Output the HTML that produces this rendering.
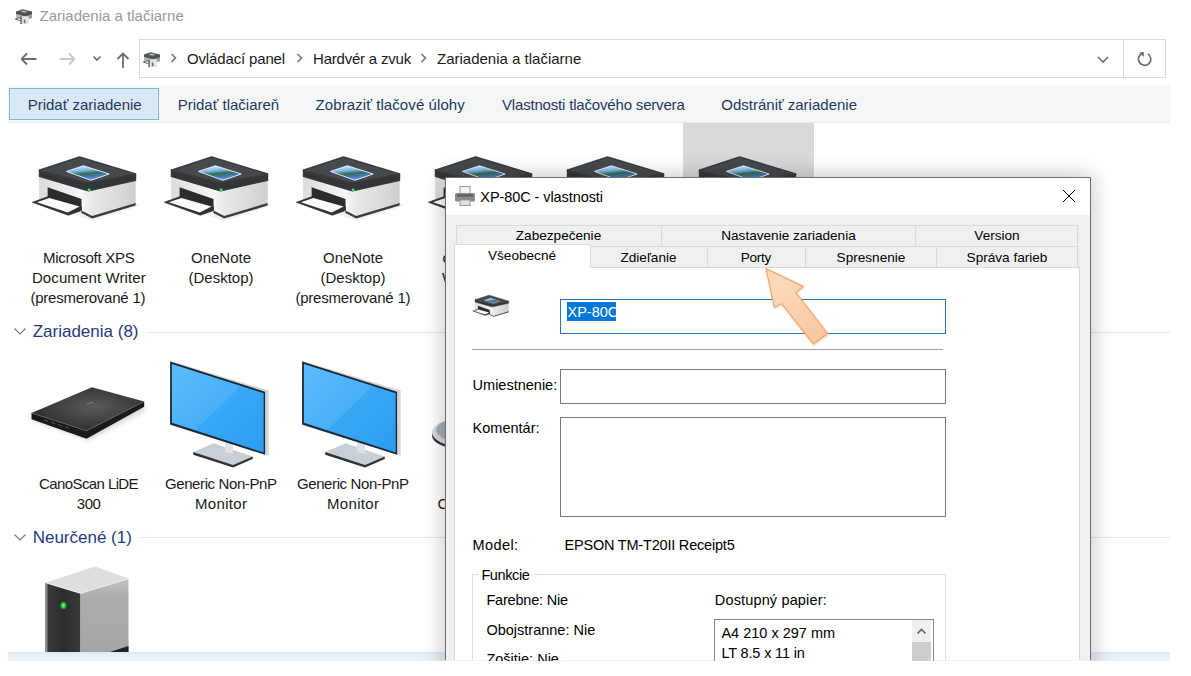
<!DOCTYPE html>
<html><head><meta charset="utf-8"><style>
html,body{margin:0;padding:0;background:#fff;width:1191px;height:676px;overflow:hidden;position:relative}
.t{position:absolute;font-family:"Liberation Sans", sans-serif;white-space:nowrap}
.b{position:absolute}
#clip{position:absolute;left:0;top:0;width:1191px;height:661px;overflow:hidden}
</style></head><body><div id="clip">
<svg class="b" style="left:15px;top:8px" width="19" height="18" viewBox="0 0 19 18"><path d="M1 6 L10 8.5 L17 6 L17 10 L10 12.3 L1 9.6Z" fill="#b4b6b8"/><path d="M10 8.5 L17 6 L17 10 L10 12.3Z" fill="#9a9c9e"/><path d="M1 3.6 L7.5 1.2 L17 3.6 L17 6.2 L10 8.6 L1 6.1Z" fill="#505356"/><path d="M5.2 3.4 L8.2 2.4 L12.6 3.6 L9.6 4.7Z" fill="#a3bdb6"/><path d="M0.3 11 L3.2 9.8 L8.2 11.2 L5.2 12.6Z" fill="#fff" stroke="#3a3a3a" stroke-width="0.8"/><rect x="5.4" y="8.3" width="8.4" height="7.8" fill="#e4e4e4"/><rect x="5.4" y="8.3" width="1.3" height="7.8" fill="#555"/><rect x="8.8" y="11.6" width="1.6" height="3.6" fill="#6a6a6a"/></svg>
<div class="t" style="left:39.50px;top:5.80px;font-size:15px;line-height:19px;color:#999;">Zariadenia a tlačiarne</div>
<svg class="b" style="left:16px;top:48px" width="120" height="24" viewBox="0 0 120 24"><path d="M5.5 11 H20.5 M5.5 11 L11 5.5 M5.5 11 L11 16.5" stroke="#6d6d6d" stroke-width="1.8" fill="none"/><path d="M43.5 11 H58.5 M58.5 11 L53 5.5 M58.5 11 L53 16.5" stroke="#c8c8c8" stroke-width="1.8" fill="none"/><path d="M77.5 8.5 L81 12 L84.5 8.5" stroke="#6d6d6d" stroke-width="1.6" fill="none"/><path d="M107 20 V5.5 M101.5 11 L107 5.5 L112.5 11" stroke="#6d6d6d" stroke-width="1.8" fill="none"/></svg>
<div class="b" style="left:139px;top:39px;width:985px;height:39px;border:1px solid #d9d9d9;background:#fff;box-sizing:border-box"></div>
<div class="b" style="left:1123px;top:39px;width:43px;height:39px;border:1px solid #d9d9d9;background:#fff;box-sizing:border-box"></div>
<svg class="b" style="left:143px;top:51px" width="19" height="18" viewBox="0 0 19 18"><path d="M1 6 L10 8.5 L17 6 L17 10 L10 12.3 L1 9.6Z" fill="#b4b6b8"/><path d="M10 8.5 L17 6 L17 10 L10 12.3Z" fill="#9a9c9e"/><path d="M1 3.6 L7.5 1.2 L17 3.6 L17 6.2 L10 8.6 L1 6.1Z" fill="#505356"/><path d="M5.2 3.4 L8.2 2.4 L12.6 3.6 L9.6 4.7Z" fill="#a3bdb6"/><path d="M0.3 11 L3.2 9.8 L8.2 11.2 L5.2 12.6Z" fill="#fff" stroke="#3a3a3a" stroke-width="0.8"/><rect x="5.4" y="8.3" width="8.4" height="7.8" fill="#e4e4e4"/><rect x="5.4" y="8.3" width="1.3" height="7.8" fill="#555"/><rect x="8.8" y="11.6" width="1.6" height="3.6" fill="#6a6a6a"/></svg>
<svg class="b" style="left:165px;top:50px" width="280" height="18" viewBox="0 0 280 18"><path d="M6.5 4 L10.5 8 L6.5 12" stroke="#7a7a7a" stroke-width="1.7" fill="none"/><path d="M132.5 4 L136.5 8 L132.5 12" stroke="#7a7a7a" stroke-width="1.7" fill="none"/><path d="M256.5 4 L260.5 8 L256.5 12" stroke="#7a7a7a" stroke-width="1.7" fill="none"/></svg>
<div class="t" style="left:187.00px;top:49.30px;font-size:15px;line-height:19px;color:#1a1a1a;letter-spacing:-0.15px;">Ovládací panel</div>
<div class="t" style="left:313.00px;top:49.30px;font-size:15px;line-height:19px;color:#1a1a1a;letter-spacing:-0.207px;">Hardvér a zvuk</div>
<div class="t" style="left:437.00px;top:49.30px;font-size:15px;line-height:19px;color:#1a1a1a;">Zariadenia a tlačiarne</div>
<svg class="b" style="left:1094px;top:50px" width="20" height="20" viewBox="0 0 20 20"><path d="M4 7 L9 12 L14 7" stroke="#6d6d6d" stroke-width="1.6" fill="none"/></svg>
<svg class="b" style="left:1134px;top:49px" width="22" height="22" viewBox="0 0 22 22"><path d="M13.98 4.9 A6.2 6.2 0 1 1 8.8 4.2" stroke="#6d6d6d" stroke-width="1.7" fill="none"/><path d="M5.2 3.4 L10.0 3.1 L9.6 8.0Z" fill="#6d6d6d"/></svg>
<div class="b" style="left:8px;top:85px;width:1162px;height:38px;background:#f5f6f7;border-bottom:1px solid #e6e9ee;box-sizing:border-box"></div>
<div class="b" style="left:9px;top:88px;width:150px;height:32px;background:#dae8f5;border:1px solid #86b6d2;box-sizing:border-box;box-shadow:inset 0 0 0 1px #d4f2fb"></div>
<div class="t" style="left:27.70px;top:95.20px;font-size:15px;line-height:19px;color:#1e395b;">Pridať zariadenie</div>
<div class="t" style="left:177.70px;top:95.40px;font-size:15px;line-height:19px;color:#1e395b;">Pridať tlačiareň</div>
<div class="t" style="left:315.60px;top:95.40px;font-size:15px;line-height:19px;color:#1e395b;letter-spacing:0.086px;">Zobraziť tlačové úlohy</div>
<div class="t" style="left:502.00px;top:95.40px;font-size:15px;line-height:19px;color:#1e395b;letter-spacing:-0.179px;">Vlastnosti tlačového servera</div>
<div class="t" style="left:721.30px;top:95.40px;font-size:15px;line-height:19px;color:#1e395b;">Odstrániť zariadenie</div>
<div class="b" style="left:683px;top:123px;width:131px;height:180px;background:#d9d9d9"></div>
<svg class="b" style="left:25px;top:145px" width="120.00" height="80.00" viewBox="0 0 120 80"><defs><linearGradient id="pb0" x1="0" y1="0" x2="1" y2="0"><stop offset="0" stop-color="#dcdcdc"/><stop offset="0.45" stop-color="#f6f6f6"/><stop offset="0.55" stop-color="#e9e9e9"/><stop offset="1" stop-color="#cfcfcf"/></linearGradient><linearGradient id="scr0" x1="0.2" y1="0" x2="0.5" y2="1"><stop offset="0" stop-color="#d6ecff"/><stop offset="0.35" stop-color="#7ab8f0"/><stop offset="0.55" stop-color="#3d6e48"/><stop offset="0.75" stop-color="#3c76bb"/><stop offset="1" stop-color="#6b9fd8"/></linearGradient></defs><path d="M10 56 L67 76 L114 61 L110 56 L66 70Z" fill="#000" fill-opacity="0.06"/><path d="M14.4 31 L63.4 45.9 L110.6 35 L110.6 57.9 L67.2 71.1 L14.4 54Z" fill="url(#pb0)" stroke="#d8d8d8" stroke-width="0.6" stroke-linejoin="round"/><path d="M56.5 65.4 L67.2 71.1 L110.6 57.9 L110.6 60.6 L67.2 73.6 L56.5 68Z" fill="#3c3c3c"/><path d="M14.4 25.2 L62.8 38 L110.6 29 L110.6 35.3 L63.4 45.9 L14.4 31.5Z" fill="#333639" stroke="#333639" stroke-width="1.2" stroke-linejoin="round"/><path d="M14.4 25.2 L54.6 12 L110.6 29 L62.8 38Z" fill="#46494d" stroke="#3a3d41" stroke-width="1.6" stroke-linejoin="round"/><path d="M41.4 26.4 L58.4 20.8 L84.2 29 L66 35.3Z" fill="url(#scr0)" stroke="#eef6ff" stroke-width="0.9" stroke-linejoin="round"/><path d="M22.6 42.2 L56.5 54.1 L56.5 65.4 L22.6 52.6Z" fill="#2a2c2e"/><path d="M7.5 57.3 L22.6 51.8 L56.5 61.8 L56.5 65.4 L43.3 70.2Z" fill="#2f3133" stroke="#2f3133" stroke-width="0.8" stroke-linejoin="round"/><path d="M11.8 57.3 L24.3 52.9 L54.6 61.6 L42.8 67.4Z" fill="#fbfbfb"/><circle cx="64.1" cy="44.7" r="1.5" fill="#3ee05a"/></svg>
<svg class="b" style="left:157px;top:145px" width="120.00" height="80.00" viewBox="0 0 120 80"><defs><linearGradient id="pb1" x1="0" y1="0" x2="1" y2="0"><stop offset="0" stop-color="#dcdcdc"/><stop offset="0.45" stop-color="#f6f6f6"/><stop offset="0.55" stop-color="#e9e9e9"/><stop offset="1" stop-color="#cfcfcf"/></linearGradient><linearGradient id="scr1" x1="0.2" y1="0" x2="0.5" y2="1"><stop offset="0" stop-color="#d6ecff"/><stop offset="0.35" stop-color="#7ab8f0"/><stop offset="0.55" stop-color="#3d6e48"/><stop offset="0.75" stop-color="#3c76bb"/><stop offset="1" stop-color="#6b9fd8"/></linearGradient></defs><path d="M10 56 L67 76 L114 61 L110 56 L66 70Z" fill="#000" fill-opacity="0.06"/><path d="M14.4 31 L63.4 45.9 L110.6 35 L110.6 57.9 L67.2 71.1 L14.4 54Z" fill="url(#pb1)" stroke="#d8d8d8" stroke-width="0.6" stroke-linejoin="round"/><path d="M56.5 65.4 L67.2 71.1 L110.6 57.9 L110.6 60.6 L67.2 73.6 L56.5 68Z" fill="#3c3c3c"/><path d="M14.4 25.2 L62.8 38 L110.6 29 L110.6 35.3 L63.4 45.9 L14.4 31.5Z" fill="#333639" stroke="#333639" stroke-width="1.2" stroke-linejoin="round"/><path d="M14.4 25.2 L54.6 12 L110.6 29 L62.8 38Z" fill="#46494d" stroke="#3a3d41" stroke-width="1.6" stroke-linejoin="round"/><path d="M41.4 26.4 L58.4 20.8 L84.2 29 L66 35.3Z" fill="url(#scr1)" stroke="#eef6ff" stroke-width="0.9" stroke-linejoin="round"/><path d="M22.6 42.2 L56.5 54.1 L56.5 65.4 L22.6 52.6Z" fill="#2a2c2e"/><path d="M7.5 57.3 L22.6 51.8 L56.5 61.8 L56.5 65.4 L43.3 70.2Z" fill="#2f3133" stroke="#2f3133" stroke-width="0.8" stroke-linejoin="round"/><path d="M11.8 57.3 L24.3 52.9 L54.6 61.6 L42.8 67.4Z" fill="#fbfbfb"/><circle cx="64.1" cy="44.7" r="1.5" fill="#3ee05a"/></svg>
<svg class="b" style="left:289px;top:145px" width="120.00" height="80.00" viewBox="0 0 120 80"><defs><linearGradient id="pb2" x1="0" y1="0" x2="1" y2="0"><stop offset="0" stop-color="#dcdcdc"/><stop offset="0.45" stop-color="#f6f6f6"/><stop offset="0.55" stop-color="#e9e9e9"/><stop offset="1" stop-color="#cfcfcf"/></linearGradient><linearGradient id="scr2" x1="0.2" y1="0" x2="0.5" y2="1"><stop offset="0" stop-color="#d6ecff"/><stop offset="0.35" stop-color="#7ab8f0"/><stop offset="0.55" stop-color="#3d6e48"/><stop offset="0.75" stop-color="#3c76bb"/><stop offset="1" stop-color="#6b9fd8"/></linearGradient></defs><path d="M10 56 L67 76 L114 61 L110 56 L66 70Z" fill="#000" fill-opacity="0.06"/><path d="M14.4 31 L63.4 45.9 L110.6 35 L110.6 57.9 L67.2 71.1 L14.4 54Z" fill="url(#pb2)" stroke="#d8d8d8" stroke-width="0.6" stroke-linejoin="round"/><path d="M56.5 65.4 L67.2 71.1 L110.6 57.9 L110.6 60.6 L67.2 73.6 L56.5 68Z" fill="#3c3c3c"/><path d="M14.4 25.2 L62.8 38 L110.6 29 L110.6 35.3 L63.4 45.9 L14.4 31.5Z" fill="#333639" stroke="#333639" stroke-width="1.2" stroke-linejoin="round"/><path d="M14.4 25.2 L54.6 12 L110.6 29 L62.8 38Z" fill="#46494d" stroke="#3a3d41" stroke-width="1.6" stroke-linejoin="round"/><path d="M41.4 26.4 L58.4 20.8 L84.2 29 L66 35.3Z" fill="url(#scr2)" stroke="#eef6ff" stroke-width="0.9" stroke-linejoin="round"/><path d="M22.6 42.2 L56.5 54.1 L56.5 65.4 L22.6 52.6Z" fill="#2a2c2e"/><path d="M7.5 57.3 L22.6 51.8 L56.5 61.8 L56.5 65.4 L43.3 70.2Z" fill="#2f3133" stroke="#2f3133" stroke-width="0.8" stroke-linejoin="round"/><path d="M11.8 57.3 L24.3 52.9 L54.6 61.6 L42.8 67.4Z" fill="#fbfbfb"/><circle cx="64.1" cy="44.7" r="1.5" fill="#3ee05a"/></svg>
<svg class="b" style="left:421px;top:145px" width="120.00" height="80.00" viewBox="0 0 120 80"><defs><linearGradient id="pb3" x1="0" y1="0" x2="1" y2="0"><stop offset="0" stop-color="#dcdcdc"/><stop offset="0.45" stop-color="#f6f6f6"/><stop offset="0.55" stop-color="#e9e9e9"/><stop offset="1" stop-color="#cfcfcf"/></linearGradient><linearGradient id="scr3" x1="0.2" y1="0" x2="0.5" y2="1"><stop offset="0" stop-color="#d6ecff"/><stop offset="0.35" stop-color="#7ab8f0"/><stop offset="0.55" stop-color="#3d6e48"/><stop offset="0.75" stop-color="#3c76bb"/><stop offset="1" stop-color="#6b9fd8"/></linearGradient></defs><path d="M10 56 L67 76 L114 61 L110 56 L66 70Z" fill="#000" fill-opacity="0.06"/><path d="M14.4 31 L63.4 45.9 L110.6 35 L110.6 57.9 L67.2 71.1 L14.4 54Z" fill="url(#pb3)" stroke="#d8d8d8" stroke-width="0.6" stroke-linejoin="round"/><path d="M56.5 65.4 L67.2 71.1 L110.6 57.9 L110.6 60.6 L67.2 73.6 L56.5 68Z" fill="#3c3c3c"/><path d="M14.4 25.2 L62.8 38 L110.6 29 L110.6 35.3 L63.4 45.9 L14.4 31.5Z" fill="#333639" stroke="#333639" stroke-width="1.2" stroke-linejoin="round"/><path d="M14.4 25.2 L54.6 12 L110.6 29 L62.8 38Z" fill="#46494d" stroke="#3a3d41" stroke-width="1.6" stroke-linejoin="round"/><path d="M41.4 26.4 L58.4 20.8 L84.2 29 L66 35.3Z" fill="url(#scr3)" stroke="#eef6ff" stroke-width="0.9" stroke-linejoin="round"/><path d="M22.6 42.2 L56.5 54.1 L56.5 65.4 L22.6 52.6Z" fill="#2a2c2e"/><path d="M7.5 57.3 L22.6 51.8 L56.5 61.8 L56.5 65.4 L43.3 70.2Z" fill="#2f3133" stroke="#2f3133" stroke-width="0.8" stroke-linejoin="round"/><path d="M11.8 57.3 L24.3 52.9 L54.6 61.6 L42.8 67.4Z" fill="#fbfbfb"/><circle cx="64.1" cy="44.7" r="1.5" fill="#3ee05a"/></svg>
<svg class="b" style="left:553px;top:145px" width="120.00" height="80.00" viewBox="0 0 120 80"><defs><linearGradient id="pb4" x1="0" y1="0" x2="1" y2="0"><stop offset="0" stop-color="#dcdcdc"/><stop offset="0.45" stop-color="#f6f6f6"/><stop offset="0.55" stop-color="#e9e9e9"/><stop offset="1" stop-color="#cfcfcf"/></linearGradient><linearGradient id="scr4" x1="0.2" y1="0" x2="0.5" y2="1"><stop offset="0" stop-color="#d6ecff"/><stop offset="0.35" stop-color="#7ab8f0"/><stop offset="0.55" stop-color="#3d6e48"/><stop offset="0.75" stop-color="#3c76bb"/><stop offset="1" stop-color="#6b9fd8"/></linearGradient></defs><path d="M10 56 L67 76 L114 61 L110 56 L66 70Z" fill="#000" fill-opacity="0.06"/><path d="M14.4 31 L63.4 45.9 L110.6 35 L110.6 57.9 L67.2 71.1 L14.4 54Z" fill="url(#pb4)" stroke="#d8d8d8" stroke-width="0.6" stroke-linejoin="round"/><path d="M56.5 65.4 L67.2 71.1 L110.6 57.9 L110.6 60.6 L67.2 73.6 L56.5 68Z" fill="#3c3c3c"/><path d="M14.4 25.2 L62.8 38 L110.6 29 L110.6 35.3 L63.4 45.9 L14.4 31.5Z" fill="#333639" stroke="#333639" stroke-width="1.2" stroke-linejoin="round"/><path d="M14.4 25.2 L54.6 12 L110.6 29 L62.8 38Z" fill="#46494d" stroke="#3a3d41" stroke-width="1.6" stroke-linejoin="round"/><path d="M41.4 26.4 L58.4 20.8 L84.2 29 L66 35.3Z" fill="url(#scr4)" stroke="#eef6ff" stroke-width="0.9" stroke-linejoin="round"/><path d="M22.6 42.2 L56.5 54.1 L56.5 65.4 L22.6 52.6Z" fill="#2a2c2e"/><path d="M7.5 57.3 L22.6 51.8 L56.5 61.8 L56.5 65.4 L43.3 70.2Z" fill="#2f3133" stroke="#2f3133" stroke-width="0.8" stroke-linejoin="round"/><path d="M11.8 57.3 L24.3 52.9 L54.6 61.6 L42.8 67.4Z" fill="#fbfbfb"/><circle cx="64.1" cy="44.7" r="1.5" fill="#3ee05a"/></svg>
<svg class="b" style="left:685px;top:145px" width="120.00" height="80.00" viewBox="0 0 120 80"><defs><linearGradient id="pb5" x1="0" y1="0" x2="1" y2="0"><stop offset="0" stop-color="#dcdcdc"/><stop offset="0.45" stop-color="#f6f6f6"/><stop offset="0.55" stop-color="#e9e9e9"/><stop offset="1" stop-color="#cfcfcf"/></linearGradient><linearGradient id="scr5" x1="0.2" y1="0" x2="0.5" y2="1"><stop offset="0" stop-color="#d6ecff"/><stop offset="0.35" stop-color="#7ab8f0"/><stop offset="0.55" stop-color="#3d6e48"/><stop offset="0.75" stop-color="#3c76bb"/><stop offset="1" stop-color="#6b9fd8"/></linearGradient></defs><path d="M10 56 L67 76 L114 61 L110 56 L66 70Z" fill="#000" fill-opacity="0.06"/><path d="M14.4 31 L63.4 45.9 L110.6 35 L110.6 57.9 L67.2 71.1 L14.4 54Z" fill="url(#pb5)" stroke="#d8d8d8" stroke-width="0.6" stroke-linejoin="round"/><path d="M56.5 65.4 L67.2 71.1 L110.6 57.9 L110.6 60.6 L67.2 73.6 L56.5 68Z" fill="#3c3c3c"/><path d="M14.4 25.2 L62.8 38 L110.6 29 L110.6 35.3 L63.4 45.9 L14.4 31.5Z" fill="#333639" stroke="#333639" stroke-width="1.2" stroke-linejoin="round"/><path d="M14.4 25.2 L54.6 12 L110.6 29 L62.8 38Z" fill="#46494d" stroke="#3a3d41" stroke-width="1.6" stroke-linejoin="round"/><path d="M41.4 26.4 L58.4 20.8 L84.2 29 L66 35.3Z" fill="url(#scr5)" stroke="#eef6ff" stroke-width="0.9" stroke-linejoin="round"/><path d="M22.6 42.2 L56.5 54.1 L56.5 65.4 L22.6 52.6Z" fill="#2a2c2e"/><path d="M7.5 57.3 L22.6 51.8 L56.5 61.8 L56.5 65.4 L43.3 70.2Z" fill="#2f3133" stroke="#2f3133" stroke-width="0.8" stroke-linejoin="round"/><path d="M11.8 57.3 L24.3 52.9 L54.6 61.6 L42.8 67.4Z" fill="#fbfbfb"/><circle cx="64.1" cy="44.7" r="1.5" fill="#3ee05a"/></svg>
<div class="t" style="left:-61.33px;top:248.10px;width:300px;text-align:center;font-size:15px;line-height:19px;color:#1a1a1a;letter-spacing:-0.269px;">Microsoft XPS</div>
<div class="t" style="left:-61.14px;top:268.10px;width:300px;text-align:center;font-size:15px;line-height:19px;color:#1a1a1a;letter-spacing:0.113px;">Document Writer</div>
<div class="t" style="left:-62.11px;top:288.10px;width:300px;text-align:center;font-size:15px;line-height:19px;color:#1a1a1a;letter-spacing:-0.213px;">(presmerované 1)</div>
<div class="t" style="left:71.00px;top:248.10px;width:300px;text-align:center;font-size:15px;line-height:19px;color:#1a1a1a;">OneNote</div>
<div class="t" style="left:71.00px;top:268.10px;width:300px;text-align:center;font-size:15px;line-height:19px;color:#1a1a1a;">(Desktop)</div>
<div class="t" style="left:203.00px;top:248.10px;width:300px;text-align:center;font-size:15px;line-height:19px;color:#1a1a1a;">OneNote</div>
<div class="t" style="left:203.00px;top:268.10px;width:300px;text-align:center;font-size:15px;line-height:19px;color:#1a1a1a;">(Desktop)</div>
<div class="t" style="left:202.89px;top:288.10px;width:300px;text-align:center;font-size:15px;line-height:19px;color:#1a1a1a;letter-spacing:-0.213px;">(presmerované 1)</div>
<svg class="b" style="left:12px;top:324px" width="16" height="14" viewBox="0 0 16 14"><path d="M2.5 4.5 L8 10 L13.5 4.5" stroke="#7a7a7a" stroke-width="1.2" fill="none"/></svg>
<div class="t" style="left:32.70px;top:321.31px;font-size:17px;line-height:21px;color:#263a82;">Zariadenia (8)</div>
<div class="b" style="left:147px;top:332px;width:1023px;height:1px;background:#e5e5e5"></div>
<svg class="b" style="left:12px;top:530px" width="16" height="14" viewBox="0 0 16 14"><path d="M2.5 4.5 L8 10 L13.5 4.5" stroke="#7a7a7a" stroke-width="1.2" fill="none"/></svg>
<div class="t" style="left:32.70px;top:527.11px;font-size:17px;line-height:21px;color:#263a82;">Neurčené (1)</div>
<div class="b" style="left:141px;top:537px;width:1029px;height:1px;background:#e5e5e5"></div>
<svg class="b" style="left:24px;top:380px" width="128" height="70" viewBox="0 0 128 70"><defs><radialGradient id="sc" cx="0.55" cy="0.45" r="0.6"><stop offset="0" stop-color="#5a5a5a"/><stop offset="0.6" stop-color="#3e3e3e"/><stop offset="1" stop-color="#2a2a2a"/></radialGradient><filter id="sblur" x="-20%" y="-50%" width="140%" height="200%"><feGaussianBlur stdDeviation="2.5"/></filter></defs><path d="M9 40 L64 60 L122 30 L120 26 L63 52 L9 34Z" fill="#000" fill-opacity="0.18" filter="url(#sblur)"/><path d="M7.5 33 L62.5 50.7 L120.2 21.5 L120.2 26.8 L62.5 58.7 L7.5 39.2Z" fill="#1a1a1a"/><path d="M7.5 33 L67.9 7.3 L120.2 21.5 L62.5 50.7Z" fill="url(#sc)"/><path d="M7.5 33 L62.5 50.7 L120.2 21.5" stroke="#6a6a6a" stroke-width="0.6" fill="none"/><path d="M20 40 L24 41.3 M27 42.3 L31 43.6 M34 44.6 L38 45.9 M41 46.9 L45 48.2" stroke="#555" stroke-width="1"/><path d="M63 24 L69 22" stroke="#8a8a8a" stroke-width="0.8"/></svg>
<svg class="b" style="left:156px;top:358px" width="120" height="112" viewBox="0 0 120 112"><defs><linearGradient id="ms0" x1="0" y1="0" x2="1" y2="1"><stop offset="0" stop-color="#5cbcfb"/><stop offset="0.5" stop-color="#48b0f8"/><stop offset="0.5" stop-color="#38a7f5"/><stop offset="1" stop-color="#2b9df0"/></linearGradient></defs><path d="M37.2 94.1 L57.6 85.2 L96.7 98.6 L77.1 107.1Z" fill="#c9d0d5"/><path d="M37.2 94.1 L77.1 107.1 L96.7 98.6 L96.7 101 L77.1 109.6 L37.2 96.8Z" fill="#2e3338"/><path d="M69 82 L77 84 L77 96 L69 94Z" fill="#dfe3e6"/><path d="M14.1 2.7 L112.7 32.5 L112.7 97.7 L14.1 67Z" fill="#d3d6d9"/><path d="M14.1 3.5 L109.1 33.7 L109.1 96.8 L14.1 66.6Z" fill="#1b2836"/><path d="M15.9 5.9 L107.7 35.2 L107.7 94.6 L15.9 64.8Z" fill="url(#ms0)"/></svg>
<svg class="b" style="left:288px;top:358px" width="120" height="112" viewBox="0 0 120 112"><defs><linearGradient id="ms1" x1="0" y1="0" x2="1" y2="1"><stop offset="0" stop-color="#5cbcfb"/><stop offset="0.5" stop-color="#48b0f8"/><stop offset="0.5" stop-color="#38a7f5"/><stop offset="1" stop-color="#2b9df0"/></linearGradient></defs><path d="M37.2 94.1 L57.6 85.2 L96.7 98.6 L77.1 107.1Z" fill="#c9d0d5"/><path d="M37.2 94.1 L77.1 107.1 L96.7 98.6 L96.7 101 L77.1 109.6 L37.2 96.8Z" fill="#2e3338"/><path d="M69 82 L77 84 L77 96 L69 94Z" fill="#dfe3e6"/><path d="M14.1 2.7 L112.7 32.5 L112.7 97.7 L14.1 67Z" fill="#d3d6d9"/><path d="M14.1 3.5 L109.1 33.7 L109.1 96.8 L14.1 66.6Z" fill="#1b2836"/><path d="M15.9 5.9 L107.7 35.2 L107.7 94.6 L15.9 64.8Z" fill="url(#ms1)"/></svg>
<div class="t" style="left:-61.50px;top:474.30px;width:300px;text-align:center;font-size:15px;line-height:19px;color:#1a1a1a;letter-spacing:-0.59px;">CanoScan LiDE</div>
<div class="t" style="left:-61.45px;top:494.30px;width:300px;text-align:center;font-size:15px;line-height:19px;color:#1a1a1a;letter-spacing:-0.5px;">300</div>
<div class="t" style="left:70.81px;top:474.30px;width:300px;text-align:center;font-size:15px;line-height:19px;color:#1a1a1a;letter-spacing:-0.39px;">Generic Non-PnP</div>
<div class="t" style="left:71.18px;top:494.30px;width:300px;text-align:center;font-size:15px;line-height:19px;color:#1a1a1a;letter-spacing:0.35px;">Monitor</div>
<div class="t" style="left:202.81px;top:474.30px;width:300px;text-align:center;font-size:15px;line-height:19px;color:#1a1a1a;letter-spacing:-0.39px;">Generic Non-PnP</div>
<div class="t" style="left:203.18px;top:494.30px;width:300px;text-align:center;font-size:15px;line-height:19px;color:#1a1a1a;letter-spacing:0.35px;">Monitor</div>
<svg class="b" style="left:44px;top:565px" width="88" height="88" viewBox="0 0 88 88"><defs><linearGradient id="tw" x1="0" y1="0" x2="0" y2="1"><stop offset="0" stop-color="#c4c4c4"/><stop offset="0.25" stop-color="#acacac"/><stop offset="1" stop-color="#a6a6a6"/></linearGradient><linearGradient id="tf" x1="0" y1="0" x2="1" y2="0"><stop offset="0" stop-color="#3c3c3e"/><stop offset="0.5" stop-color="#2c2c2e"/><stop offset="1" stop-color="#3a3a3c"/></linearGradient><radialGradient id="led"><stop offset="0" stop-color="#8dff8d"/><stop offset="0.6" stop-color="#22c23a"/><stop offset="1" stop-color="#1b6b2a"/></radialGradient></defs><path d="M1.5 17.7 L51 1.4 L84.5 13.6 L36.5 28.3Z" fill="#dedede"/><path d="M1.5 17.7 L36.5 28.3 L36.5 87 L1.5 87Z" fill="url(#tf)"/><path d="M1.5 17.7 L1.5 87 L3.5 87 L3.5 19Z" fill="#8a8a8a"/><path d="M36.5 28.3 L84.5 13.6 L84.5 87 L36.5 87Z" fill="url(#tw)"/><path d="M1.5 17.7 L36.5 28.3 L84.5 13.6" stroke="#f2f2f2" stroke-width="1" fill="none"/><path d="M66 87 L84.5 81 L84.5 87Z" fill="#222"/><ellipse cx="19.4" cy="40.5" rx="3.3" ry="4" fill="url(#led)"/></svg>
<div class="b" style="left:8px;top:652px;width:1162px;height:9px;background:linear-gradient(#dfe6ef,#eaf0f8 40%,#eef3fa)"></div>
<div class="t" style="left:442.50px;top:248.10px;font-size:15px;line-height:19px;color:#1a1a1a;">c</div>
<div class="t" style="left:442.00px;top:268.10px;font-size:15px;line-height:19px;color:#1a1a1a;">W</div>
<svg class="b" style="left:428px;top:412px" width="18" height="42" viewBox="0 0 18 42"><ellipse cx="34" cy="23.5" rx="30" ry="13.5" fill="#2e3236"/><ellipse cx="34" cy="20.5" rx="30" ry="14" fill="#d5dade"/><ellipse cx="35" cy="18" rx="27" ry="12" fill="#a3aeb8"/></svg>
<div class="t" style="left:437.50px;top:494.30px;font-size:15px;line-height:19px;color:#1a1a1a;">C</div>
<div class="b" style="left:445px;top:177px;width:646px;height:520px;box-shadow:0 0 20px 2px rgba(0,0,0,0.22)"></div>
<div class="b" style="left:445px;top:177px;width:646px;height:483px;background:#f0f0f0;border:1px solid #6e6e6e;border-bottom:none;box-sizing:border-box"></div>
<div class="b" style="left:446px;top:178px;width:644px;height:37px;background:#fff"></div>
<svg class="b" style="left:454px;top:185px" width="22" height="22" viewBox="0 0 22 22"><rect x="6" y="1.5" width="10" height="7" fill="#f4f4f4" stroke="#9a9a9a" stroke-width="1"/><rect x="1" y="8" width="20" height="8.5" rx="1.5" fill="#8a8a8a"/><rect x="3" y="9.5" width="16" height="2" fill="#5a5a5a"/><rect x="6" y="15" width="10" height="5.5" fill="#d6e4ea" stroke="#9a9a9a" stroke-width="1"/></svg>
<div class="t" style="left:480.30px;top:187.78px;font-size:14.5px;line-height:18px;color:#000;letter-spacing:-0.079px;">XP-80C - vlastnosti</div>
<svg class="b" style="left:1062px;top:189px" width="14" height="14" viewBox="0 0 14 14"><path d="M1 1 L13 13 M13 1 L1 13" stroke="#000" stroke-width="1"/></svg>
<div class="b" style="left:456px;top:225px;width:206px;height:22px;background:#f0f0f0;border:1px solid #d9d9d9;box-sizing:border-box"></div>
<div class="b" style="left:661px;top:225px;width:255px;height:22px;background:#f0f0f0;border:1px solid #d9d9d9;box-sizing:border-box"></div>
<div class="b" style="left:915px;top:225px;width:163px;height:22px;background:#f0f0f0;border:1px solid #d9d9d9;box-sizing:border-box"></div>
<div class="t" style="left:408.50px;top:227.29px;width:300px;text-align:center;font-size:13.6px;line-height:17px;color:#000;">Zabezpečenie</div>
<div class="t" style="left:638.50px;top:227.29px;width:300px;text-align:center;font-size:13.6px;line-height:17px;color:#000;">Nastavenie zariadenia</div>
<div class="t" style="left:847.00px;top:227.29px;width:300px;text-align:center;font-size:13.6px;line-height:17px;color:#000;">Version</div>
<div class="b" style="left:454px;top:267px;width:626px;height:393px;background:#fff;border:1px solid #d9d9d9;border-bottom:none;box-sizing:border-box"></div>
<div class="b" style="left:590px;top:246px;width:118px;height:22px;background:#f0f0f0;border:1px solid #d9d9d9;box-sizing:border-box"></div>
<div class="b" style="left:707px;top:246px;width:99px;height:22px;background:#f0f0f0;border:1px solid #d9d9d9;box-sizing:border-box"></div>
<div class="b" style="left:805px;top:246px;width:132px;height:22px;background:#f0f0f0;border:1px solid #d9d9d9;box-sizing:border-box"></div>
<div class="b" style="left:936px;top:246px;width:142px;height:22px;background:#f0f0f0;border:1px solid #d9d9d9;box-sizing:border-box"></div>
<div class="b" style="left:454px;top:244px;width:137px;height:24px;background:#fff;border:1px solid #d9d9d9;border-bottom:none;box-sizing:border-box"></div>
<div class="t" style="left:372.00px;top:246.59px;width:300px;text-align:center;font-size:13.6px;line-height:17px;color:#000;">Všeobecné</div>
<div class="t" style="left:498.50px;top:249.09px;width:300px;text-align:center;font-size:13.6px;line-height:17px;color:#000;">Zdieľanie</div>
<div class="t" style="left:605.83px;top:249.09px;width:300px;text-align:center;font-size:13.6px;line-height:17px;color:#000;letter-spacing:-0.34px;">Porty</div>
<div class="t" style="left:721.00px;top:249.09px;width:300px;text-align:center;font-size:13.6px;line-height:17px;color:#000;">Spresnenie</div>
<div class="t" style="left:857.00px;top:249.09px;width:300px;text-align:center;font-size:13.6px;line-height:17px;color:#000;">Správa farieb</div>
<svg class="b" style="left:470.2px;top:291.2px" width="42.00" height="28.00" viewBox="0 0 120 80"><defs><linearGradient id="pb9" x1="0" y1="0" x2="1" y2="0"><stop offset="0" stop-color="#dcdcdc"/><stop offset="0.45" stop-color="#f6f6f6"/><stop offset="0.55" stop-color="#e9e9e9"/><stop offset="1" stop-color="#cfcfcf"/></linearGradient><linearGradient id="scr9" x1="0.2" y1="0" x2="0.5" y2="1"><stop offset="0" stop-color="#d6ecff"/><stop offset="0.35" stop-color="#7ab8f0"/><stop offset="0.55" stop-color="#3d6e48"/><stop offset="0.75" stop-color="#3c76bb"/><stop offset="1" stop-color="#6b9fd8"/></linearGradient></defs><path d="M10 56 L67 76 L114 61 L110 56 L66 70Z" fill="#000" fill-opacity="0.06"/><path d="M14.4 31 L63.4 45.9 L110.6 35 L110.6 57.9 L67.2 71.1 L14.4 54Z" fill="url(#pb9)" stroke="#d8d8d8" stroke-width="0.6" stroke-linejoin="round"/><path d="M56.5 65.4 L67.2 71.1 L110.6 57.9 L110.6 60.6 L67.2 73.6 L56.5 68Z" fill="#3c3c3c"/><path d="M14.4 25.2 L62.8 38 L110.6 29 L110.6 35.3 L63.4 45.9 L14.4 31.5Z" fill="#333639" stroke="#333639" stroke-width="1.2" stroke-linejoin="round"/><path d="M14.4 25.2 L54.6 12 L110.6 29 L62.8 38Z" fill="#46494d" stroke="#3a3d41" stroke-width="1.6" stroke-linejoin="round"/><path d="M41.4 26.4 L58.4 20.8 L84.2 29 L66 35.3Z" fill="url(#scr9)" stroke="#eef6ff" stroke-width="0.9" stroke-linejoin="round"/><path d="M22.6 42.2 L56.5 54.1 L56.5 65.4 L22.6 52.6Z" fill="#2a2c2e"/><path d="M7.5 57.3 L22.6 51.8 L56.5 61.8 L56.5 65.4 L43.3 70.2Z" fill="#2f3133" stroke="#2f3133" stroke-width="0.8" stroke-linejoin="round"/><path d="M11.8 57.3 L24.3 52.9 L54.6 61.6 L42.8 67.4Z" fill="#fbfbfb"/><circle cx="64.1" cy="44.7" r="1.5" fill="#3ee05a"/></svg>
<div class="b" style="left:560px;top:299px;width:386px;height:35px;background:#fff;border:1px solid #2e75b6;box-sizing:border-box"></div>
<div class="b" style="left:567px;top:302px;width:49px;height:19px;background:#0078d7"></div>
<div class="t" style="left:567.50px;top:303.48px;font-size:14.5px;line-height:18px;color:#fff;">XP-80C</div>
<div class="b" style="left:472px;top:349px;width:471px;height:1px;background:#a0a0a0"></div>
<div class="t" style="left:472.60px;top:375.98px;font-size:14.5px;line-height:18px;color:#000;">Umiestnenie:</div>
<div class="b" style="left:560px;top:369px;width:386px;height:35px;background:#fff;border:1px solid #7a7a7a;box-sizing:border-box"></div>
<div class="t" style="left:472.60px;top:418.98px;font-size:14.5px;line-height:18px;color:#000;">Komentár:</div>
<div class="b" style="left:560px;top:417px;width:386px;height:100px;background:#fff;border:1px solid #7a7a7a;box-sizing:border-box"></div>
<div class="t" style="left:472.60px;top:536.18px;font-size:14.5px;line-height:18px;color:#000;letter-spacing:0.383px;">Model:</div>
<div class="t" style="left:564.50px;top:536.18px;font-size:14.5px;line-height:18px;color:#000;letter-spacing:-0.2px;">EPSON TM-T20II Receipt5</div>
<div class="b" style="left:472px;top:574px;width:474px;height:90px;border:1px solid #dcdcdc;border-bottom:none;box-sizing:border-box"></div>
<div class="b" style="left:478px;top:570px;width:56px;height:10px;background:#fff"></div>
<div class="t" style="left:481.40px;top:565.98px;font-size:14.5px;line-height:18px;color:#000;letter-spacing:-0.4px;">Funkcie</div>
<div class="t" style="left:486.40px;top:590.98px;font-size:14.5px;line-height:18px;color:#000;letter-spacing:-0.2px;">Farebne: Nie</div>
<div class="t" style="left:714.80px;top:591.48px;font-size:14.5px;line-height:18px;color:#000;letter-spacing:0.15px;">Dostupný papier:</div>
<div class="t" style="left:486.40px;top:620.58px;font-size:14.5px;line-height:18px;color:#000;">Obojstranne: Nie</div>
<div class="t" style="left:486.40px;top:650.48px;font-size:14.5px;line-height:18px;color:#000;">Zošitie: Nie</div>
<div class="b" style="left:714px;top:619px;width:220px;height:45px;background:#fff;border:1px solid #828790;border-bottom:none;box-sizing:border-box"></div>
<div class="t" style="left:721.40px;top:623.98px;font-size:14.5px;line-height:18px;color:#000;">A4 210 x 297 mm</div>
<div class="t" style="left:721.40px;top:643.58px;font-size:14.5px;line-height:18px;color:#000;letter-spacing:-0.15px;">LT 8.5 x 11 in</div>
<div class="b" style="left:912px;top:620px;width:19px;height:22px;background:#f0f0f0"></div>
<svg class="b" style="left:912px;top:620px" width="19" height="22" viewBox="0 0 19 22"><path d="M5.5 13.5 L9.5 9.5 L13.5 13.5" stroke="#606060" stroke-width="1.6" fill="none"/></svg>
<div class="b" style="left:912px;top:642px;width:19px;height:22px;background:#cdcdcd"></div>
<svg class="b" style="left:750px;top:255px" width="100" height="100" viewBox="750 255 100 100"><defs><linearGradient id="ar" x1="0" y1="0" x2="1" y2="1"><stop offset="0" stop-color="#fcdcc0"/><stop offset="0.5" stop-color="#fcd2b0"/><stop offset="1" stop-color="#f9c49c"/></linearGradient><filter id="arsh" x="-20%" y="-20%" width="140%" height="140%"><feDropShadow dx="0.5" dy="1" stdDeviation="1.2" flood-color="#a05a20" flood-opacity="0.25"/></filter></defs><path d="M766 268.6 L803.2 286.4 L795.9 292.6 L827.7 333.5 L813.5 344.1 L781.5 303.7 L774.3 307.2 Z" fill="url(#ar)" stroke="#efa772" stroke-width="1.2" stroke-linejoin="round" filter="url(#arsh)"/></svg>
</div></body></html>
